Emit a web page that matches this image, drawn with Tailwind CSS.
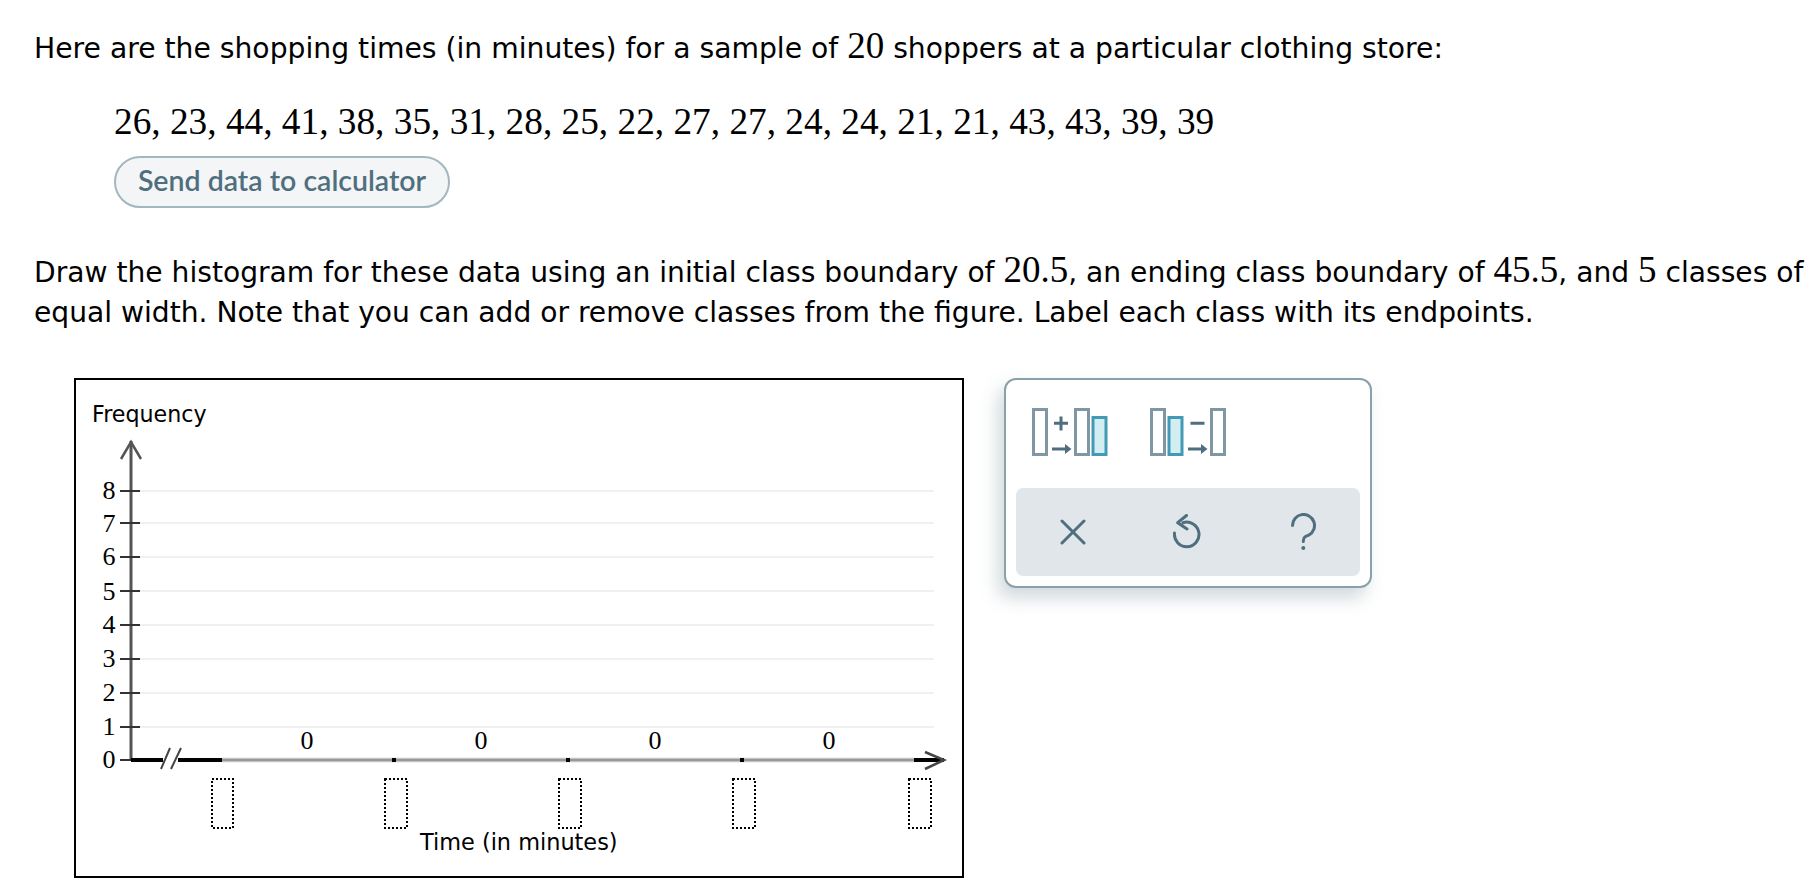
<!DOCTYPE html>
<html lang="en">
<head>
  <meta charset="UTF-8" />
  <title>Histogram question</title>
  <script src="https://cdn.jsdelivr.net/npm/@tailwindcss/browser@4"></script>
</head>
<body class="bg-white text-black font-['DejaVu_Sans',sans-serif] overflow-hidden">
  <main class="w-[1818px] h-[886px] pl-[34px] pt-[26px]">
    <!-- Data -->
    <p class="h-[40px] text-[28.22px] leading-[40px] whitespace-nowrap">Here are the shopping times (in minutes) for a sample of <span class="font-['Liberation_Serif',serif] text-[37px]">20</span> shoppers at a particular clothing store:</p>
    <div class="ml-[80px] mt-[36px] text-[37.3px] leading-[40px] font-['Liberation_Serif',serif] whitespace-nowrap">26, 23, 44, 41, 38, 35, 31, 28, 25, 22, 27, 27, 24, 24, 21, 21, 43, 43, 39, 39</div>
    <button class="ml-[80px] mt-[14px] block w-[336px] h-[52px] pb-[3px] rounded-full border-2 border-[#a3b7bf] bg-[#f3f5f7] text-[#4f6f7e] text-[28.5px] font-semibold font-['Lato',sans-serif]">Send data to calculator</button>

    <!-- Question -->
    <div class="mt-[41px] h-[84px] text-[28.15px] leading-[41px] whitespace-nowrap">
      <p class="h-[43px]">Draw the histogram for these data using an initial class boundary of <span class="font-['Liberation_Serif',serif] text-[37px]">20.5</span>, an ending class boundary of <span class="font-['Liberation_Serif',serif] text-[37px]">45.5</span>, and <span class="font-['Liberation_Serif',serif] text-[37px]">5</span> classes of</p>
      <p class="h-[41px]">equal width. Note that you can add or remove classes from the figure. Label each class with its endpoints.</p>
    </div>

    <div class="flex items-start ml-[40px] mt-[45px] gap-[40px]">
      <!-- Chart -->
      <div class="w-[890px] h-[500px] border-2 border-black">
        <svg class="block" width="886" height="496" viewBox="76 380 886 496" font-family="'Liberation Serif', serif" font-size="26">
          <text x="92" y="422" font-family="'DejaVu Sans', sans-serif" font-size="22.2">Frequency</text>

          <!-- grid lines -->
          <g stroke="#f0f0f0" stroke-width="2">
            <path d="M140 491H934M140 523H934M140 557H934M140 591H934M140 625H934M140 659H934M140 693H934M140 727H934" />
          </g>

          <!-- y axis -->
          <path d="M131 441V760" stroke="#555" stroke-width="3" fill="none" />
          <path d="M121 459L131 442L141 459" stroke="#555" stroke-width="2.5" fill="none" />
          <path d="M120 491H140M120 523H140M120 557H140M120 591H140M120 625H140M120 659H140M120 693H140M120 727H140M120 760H131" stroke="#333" stroke-width="2" />
          <g text-anchor="middle">
            <text x="109" y="499">8</text>
            <text x="109" y="532">7</text>
            <text x="109" y="565">6</text>
            <text x="109" y="600">5</text>
            <text x="109" y="633">4</text>
            <text x="109" y="667">3</text>
            <text x="109" y="701">2</text>
            <text x="109" y="735">1</text>
            <text x="109" y="768">0</text>
          </g>

          <!-- x axis -->
          <path d="M222 760H914" stroke="#c4c4c4" stroke-width="4.5" fill="none" />
          <path d="M222 760H914" stroke="#8a8a8a" stroke-width="1.5" fill="none" />
          <path d="M131 760H163M178 760H222M914 760H944" stroke="#000" stroke-width="4" fill="none" />
          <path d="M161 769L170 748M171 769L181 748" stroke="#444" stroke-width="2" fill="none" />
          <path d="M925 752L944 760L925 769" stroke="#444" stroke-width="2.5" fill="none" />
          <path d="M392 758h4v4h-4zM566 758h4v4h-4zM740 758h4v4h-4z" fill="#000" />

          <!-- class counts -->
          <g text-anchor="middle">
            <text x="307" y="749">0</text>
            <text x="481" y="749">0</text>
            <text x="655" y="749">0</text>
            <text x="829" y="749">0</text>
          </g>

          <!-- endpoint inputs -->
          <g fill="none" stroke="#000" stroke-width="2" stroke-dasharray="2 2">
            <rect x="212" y="779" width="21" height="49" />
            <rect x="385" y="779" width="22" height="49" />
            <rect x="559" y="779" width="22" height="49" />
            <rect x="733" y="779" width="22" height="49" />
            <rect x="909" y="779" width="22" height="49" />
          </g>

          <text x="420" y="850" font-family="'DejaVu Sans', sans-serif" font-size="22.4">Time (in minutes)</text>
        </svg>
      </div>

      <!-- Tools -->
      <div class="w-[368px] h-[210px] rounded-[12px] border-2 border-[#8aa0aa] bg-white shadow-[-6px_10px_18px_rgba(90,120,130,0.28)] px-[10px] pt-[28px]">
        <div class="flex gap-[42px] pl-[16px] h-[80px]">
          <svg width="76" height="48" viewBox="0 0 76 48" fill="none">
            <path d="M1.5 1.5h13v45h-13zM43.5 1.5h13v45h-13z" stroke="#7f97a2" stroke-width="3" />
            <path d="M61 9.5h13v37h-13z" stroke="#4499b5" stroke-width="3" fill="#d3eef3" />
            <path d="M22 15.3h14M29 8.5v14M20 41h14" stroke="#4f6f7e" stroke-width="3" />
            <path d="M33 36l6.5 5l-6.5 5z" fill="#4f6f7e" />
          </svg>
          <svg width="76" height="48" viewBox="0 0 76 48" fill="none">
            <path d="M1.5 1.5h13v45h-13zM61.5 1.5h13v45h-13z" stroke="#7f97a2" stroke-width="3" />
            <path d="M19 9.5h13v37h-13z" stroke="#4499b5" stroke-width="3" fill="#d3eef3" />
            <path d="M40.5 15.3h14M38 41h14" stroke="#4f6f7e" stroke-width="3" />
            <path d="M51 36l6.5 5l-6.5 5z" fill="#4f6f7e" />
          </svg>
        </div>
        <div class="grid grid-cols-3 items-center justify-items-center h-[88px] rounded-[7px] bg-[#e0e6e9]">
          <svg width="26" height="26" viewBox="0 0 26 26" fill="none" stroke="#4f6f7e" stroke-width="3" stroke-linecap="round"><path d="M2 2L24 24M24 2L2 24" /></svg>
          <svg width="30" height="36" viewBox="0 0 30 36" fill="none" stroke="#4f6f7e" stroke-width="3" stroke-linecap="round" stroke-linejoin="round"><path d="M10 8.7A12.3 12.3 0 1 1 1.5 19M13.5 1.5L4.7 8.7L14 15" /></svg>
          <svg width="26" height="38" viewBox="0 0 26 38" fill="none" stroke="#4f6f7e" stroke-width="3" stroke-linecap="round"><path d="M2.5 12.5A11 11 0 1 1 19 22C15 23.5 13.3 24 13.3 28.5" /><circle cx="13.3" cy="35" r="2" fill="#4f6f7e" stroke="none" /></svg>
        </div>
      </div>
    </div>
  </main>
</body>
</html>
